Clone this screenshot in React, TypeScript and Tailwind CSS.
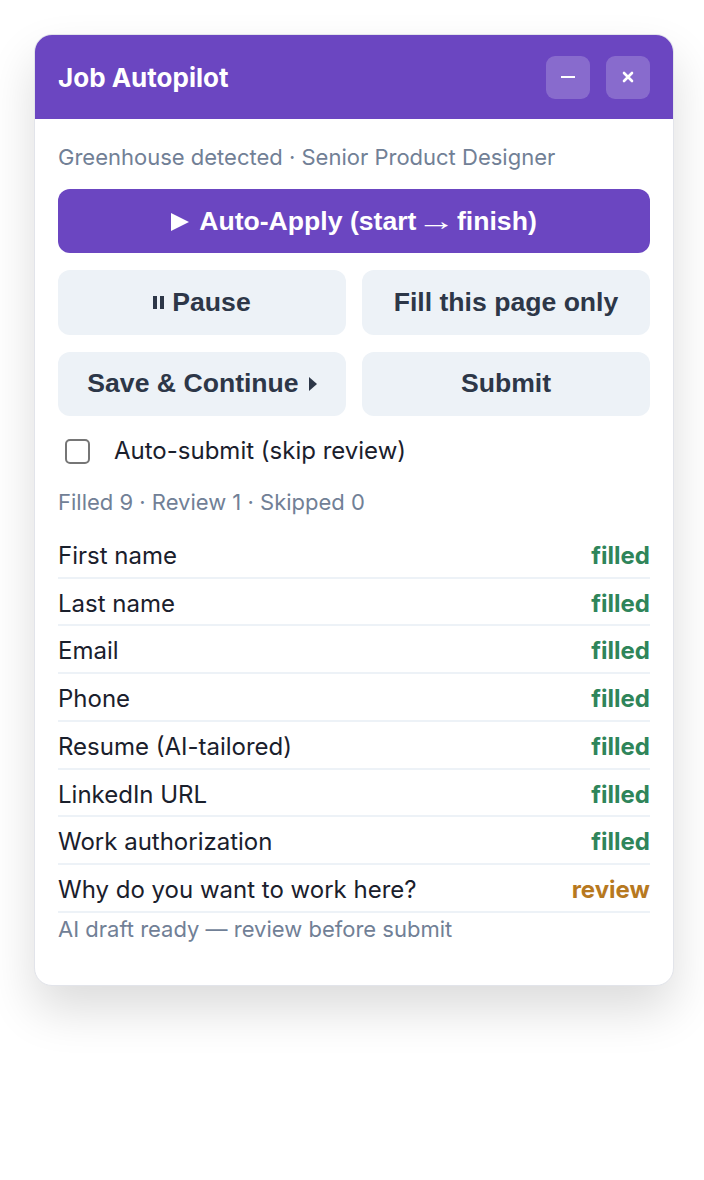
import React from 'react'

const fields: { label: string; status: 'filled' | 'review' }[] = [
  { label: 'First name', status: 'filled' },
  { label: 'Last name', status: 'filled' },
  { label: 'Email', status: 'filled' },
  { label: 'Phone', status: 'filled' },
  { label: 'Resume (AI-tailored)', status: 'filled' },
  { label: 'LinkedIn URL', status: 'filled' },
  { label: 'Work authorization', status: 'filled' },
  { label: 'Why do you want to work here?', status: 'review' },
]

const btnFont = { fontFamily: '"Liberation Sans", Arial, sans-serif' }

export default function App() {
  return (
    <div className="min-h-[1180px] w-[704px] bg-white p-[34px] pr-[30px] font-['Inter',sans-serif]">
      <div className="w-[640px] overflow-hidden rounded-[18px] border border-[#e2e4ea] bg-white shadow-[0_24px_48px_rgba(0,0,0,0.14)]">
        <div className="flex h-[84px] items-center justify-between bg-[#6b46c1] pl-[23px] pr-[23px]">
          <h1 className="text-[26px] font-bold text-white">Job Autopilot</h1>
          <div className="flex gap-4">
            <button className="flex h-[43px] w-[44px] items-center justify-center rounded-[9px] bg-white/20">
              <span className="block h-[2px] w-[14px] bg-white" />
            </button>
            <button className="flex h-[43px] w-[44px] items-center justify-center rounded-[9px] bg-white/20">
              <svg width="12" height="12" viewBox="0 0 12 12">
                <path d="M2 2 L10 10 M10 2 L2 10" stroke="white" strokeWidth="2.6" strokeLinecap="round" />
              </svg>
            </button>
          </div>
        </div>

        <div className="px-[23px] pb-[42px] pt-[24px]">
          <p className="text-[22px] leading-[28px] text-[#718096]">Greenhouse detected · Senior Product Designer</p>

          <button
            style={btnFont}
            className="mt-[18px] flex h-[64px] w-full items-center justify-center gap-[10px] rounded-[12px] bg-[#6b46c1] pt-[2px] text-[26.6px] font-bold text-white"
          >
            <svg className="shrink-0" width="18" height="18" viewBox="0 0 18 18">
              <path d="M0 0 L18 9 L0 18 Z" fill="white" />
            </svg>
            <span>
              Auto-Apply (start
              <span className="mx-[7px] inline-block scale-x-[1.45] font-normal">→</span>
              finish)
            </span>
          </button>

          <div className="mt-[17px] grid grid-cols-2 gap-x-4 gap-y-[17px]" style={btnFont}>
            <button className="flex h-[65px] items-center justify-center gap-2 rounded-[12px] bg-[#edf2f7] text-[26.6px] font-bold text-[#2d3748]">
              <span className="flex gap-[3px]">
                <span className="block h-[13px] w-[4px] bg-[#2d3748]" />
                <span className="block h-[13px] w-[4px] bg-[#2d3748]" />
              </span>
              Pause
            </button>
            <button className="flex h-[65px] items-center justify-center rounded-[12px] bg-[#edf2f7] text-[26.6px] font-bold text-[#2d3748]">
              Fill this page only
            </button>
            <button className="flex h-[64px] items-center justify-center gap-[10px] rounded-[12px] bg-[#edf2f7] text-[26.6px] font-bold text-[#2d3748]">
              Save &amp; Continue
              <svg width="8" height="14" viewBox="0 0 8 14">
                <path d="M0 0 L8 7 L0 14 Z" fill="#2d3748" />
              </svg>
            </button>
            <button className="flex h-[64px] items-center justify-center rounded-[12px] bg-[#edf2f7] text-[26.6px] font-bold text-[#2d3748]">
              Submit
            </button>
          </div>

          <label className="mt-[20px] flex items-center gap-[24px] pl-[7px]">
            <span className="block h-[25px] w-[25px] rounded-[5px] border-2 border-[#767676] bg-white" />
            <span className="text-[24px] leading-[30px] text-[#1a202c]">Auto-submit (skip review)</span>
          </label>

          <p className="mt-[22px] text-[22px] leading-[28px] text-[#718096]">Filled 9 · Review 1 · Skipped 0</p>

          <ul className="mt-[15px]">
            {fields.map((f) => (
              <li key={f.label} className="flex items-center justify-between border-b-2 border-[#edf2f7] pb-[6px] pt-[10px]">
                <span className="text-[24px] leading-[29.7px] text-[#1a202c]">{f.label}</span>
                <span
                  className={
                    f.status === 'filled'
                      ? 'text-[24px] font-bold leading-[29.7px] text-[#2f855a]'
                      : 'text-[24px] font-bold leading-[29.7px] text-[#b7791f]'
                  }
                >
                  {f.status}
                </span>
              </li>
            ))}
          </ul>

          <p className="mt-[2px] text-[22px] leading-[28px] text-[#718096]">AI draft ready — review before submit</p>
        </div>
      </div>
    </div>
  )
}
